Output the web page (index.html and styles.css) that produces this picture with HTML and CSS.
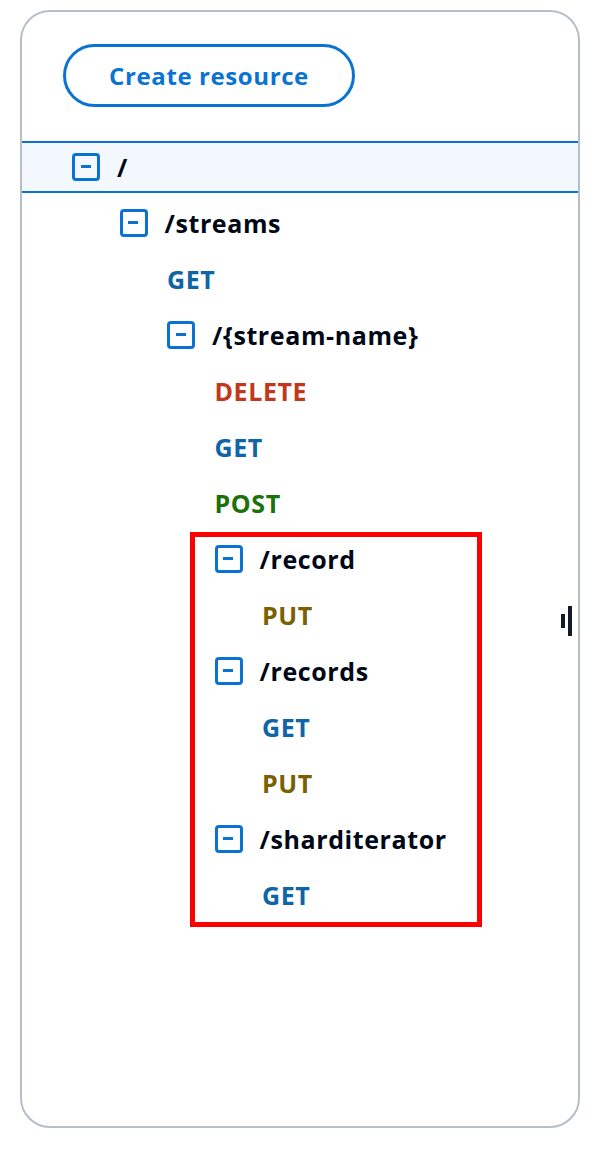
FILE: index.html
```html
<!DOCTYPE html>
<html lang="en">
<head>
<meta charset="utf-8">
<title>Resources</title>
<link rel="stylesheet" href="styles.css">
</head>
<body>
<div class="panel">
  <div class="actions">
    <button class="btn" type="button">Create resource</button>
  </div>
  <ul class="tree">
    <li class="row node selected l0"><span class="toggle"></span><span class="path">/</span></li>
    <li class="row node l1"><span class="toggle"></span><span class="path">/streams</span></li>
    <li class="row method m1 get">GET</li>
    <li class="row node l2"><span class="toggle"></span><span class="path">/{stream-name}</span></li>
    <li class="row method m2 delete">DELETE</li>
    <li class="row method m2 get">GET</li>
    <li class="row method m2 post">POST</li>
    <li class="row node l3"><span class="toggle"></span><span class="path">/record</span></li>
    <li class="row method m3 put">PUT</li>
    <li class="row node l3"><span class="toggle"></span><span class="path">/records</span></li>
    <li class="row method m3 get">GET</li>
    <li class="row method m3 put">PUT</li>
    <li class="row node l3"><span class="toggle"></span><span class="path">/sharditerator</span></li>
    <li class="row method m3 get">GET</li>
  </ul>
  <div class="highlight-box"></div>
  <div class="resize-handle"><span class="bar short"></span><span class="bar tall"></span></div>
</div>
</body>
</html>
```

FILE: styles.css
```css
* { box-sizing: border-box; }

html, body {
  margin: 0;
  padding: 0;
  background: #ffffff;
}

body {
  font-family: "Open Sans", "Noto Sans", "Liberation Sans", sans-serif;
  color: #000716;
}

.panel {
  position: relative;
  margin: 10px 18px 0 20px;
  width: 560px;
  height: 1118px;
  border: 2px solid #b6bec9;
  border-radius: 30px;
  background: #ffffff;
}

.actions {
  padding: 32px 0 0 41px;
}

.btn {
  display: inline-flex;
  align-items: center;
  justify-content: center;
  height: 63px;
  width: 292px;
  padding: 0;
  border: 3px solid #0972d3;
  border-radius: 32px;
  background: #ffffff;
  color: #0972d3;
  font-family: inherit;
  font-size: 24px;
  font-weight: 750;
  letter-spacing: 0.6px;
}

.tree {
  list-style: none;
  margin: 34px 0 0 0;
  padding: 0;
}

.row {
  display: flex;
  align-items: center;
  height: 56px;
  font-size: 25px;
  font-weight: 750;
  letter-spacing: 0.6px;
  white-space: nowrap;
}

.row.selected {
  height: 52px;
  margin: 2px 0;
  background: #f2f8fd;
  border-top: 2px solid #0972d3;
  border-bottom: 2px solid #0972d3;
}

.l0 { padding-left: 50px; }
.l1 { padding-left: 97.5px; }
.l2 { padding-left: 145px; }
.l3 { padding-left: 192.5px; }

.m1 { padding-left: 145px; }
.m2 { padding-left: 192.5px; }
.m3 { padding-left: 240px; }

.toggle {
  position: relative;
  flex: none;
  width: 28px;
  height: 28px;
  border: 3.5px solid #0972d3;
  border-radius: 4px;
  margin-right: 17px;
}

.toggle::after {
  content: "";
  position: absolute;
  left: 5.5px;
  top: 9px;
  width: 10px;
  height: 3px;
  background: #0972d3;
}

.path { color: #000716; }

.get { color: #0f65a6; }
.delete { color: #c0391d; }
.post { color: #1d7109; }
.put { color: #7a6000; }

.highlight-box {
  position: absolute;
  left: 168px;
  top: 520px;
  width: 292px;
  height: 395px;
  border: 5px solid #ff0000;
  pointer-events: none;
}

.resize-handle {
  position: absolute;
  left: 539px;
  top: 594px;
  width: 12px;
  height: 30px;
}

.resize-handle .bar {
  position: absolute;
  width: 4px;
  background: #0f1b2a;
}

.resize-handle .short {
  left: 0;
  top: 8px;
  height: 14px;
}

.resize-handle .tall {
  left: 7px;
  top: 0;
  height: 30px;
}
```
